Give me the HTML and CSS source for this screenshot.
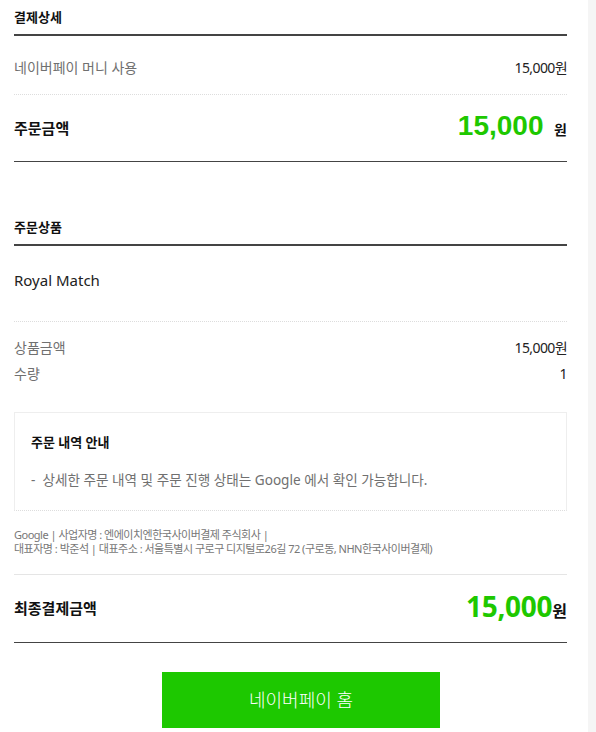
FILE: index.html
```html
<!DOCTYPE html>
<html>
<head>
	<meta charset="UTF-8">
	<title>결제상세</title>
	<link rel="stylesheet" href="styles.css">
</head>
<body>
	<div class="page">
		<section class="pay">
			<h2 class="sec-title">결제상세</h2>
			<div class="row row-money">
				<span class="label">네이버페이 머니 사용</span>
				<span class="value">15,000원</span>
			</div>
			<div class="row row-total">
				<span class="total-label">주문금액</span>
				<span class="total-value"><em>15,000</em> 원</span>
			</div>
		</section>

		<section class="goods">
			<h2 class="sec-title">주문상품</h2>
			<div class="goods-name">Royal Match</div>
			<div class="goods-detail">
				<div class="row">
					<span class="label">상품금액</span>
					<span class="value">15,000원</span>
				</div>
				<div class="row">
					<span class="label">수량</span>
					<span class="value">1</span>
				</div>
			</div>
			<div class="notice">
				<h3>주문 내역 안내</h3>
				<p>- &nbsp;상세한 주문 내역 및 주문 진행 상태는 Google 에서 확인 가능합니다.</p>
			</div>
			<p class="seller">
				Google | 사업자명 : 엔에이치엔한국사이버결제 주식회사 |<br>
				대표자명 : 박준석 | 대표주소 : 서울특별시 구로구 디지털로26길 72 (구로동, NHN한국사이버결제)
			</p>
		</section>

		<div class="row row-final">
			<span class="total-label">최종결제금액</span>
			<span class="final-value"><em>15,000</em>원</span>
		</div>

		<div class="btn-area">
			<a class="btn-home" href="#">네이버페이 홈</a>
		</div>
	</div>
</body>
</html>
```

FILE: styles.css
```css
html {
	background: #f5f5f5;
}
body {
	margin: 0;
	width: 588px;
	min-height: 732px;
	background: #fff;
	font-family: "Noto Sans", "Noto Sans CJK KR", sans-serif;
	color: #333;
}
.page {
	padding: 0 21px 0 14px;
}
.sec-title {
	margin: 0;
	padding: 9px 0 8px;
	font-size: 13px;
	line-height: 17px;
	font-weight: bold;
	color: #111;
	border-bottom: 2px solid #444;
}
.row {
	display: flex;
	justify-content: space-between;
	align-items: center;
}
.label {
	font-size: 14px;
	line-height: 18px;
	height: 18px;
	color: #707070;
}
.value {
	font-size: 14px;
	line-height: 18px;
	height: 18px;
	letter-spacing: -0.6px;
	color: #222;
}
.row-money {
	padding: 23px 0 17px;
	border-bottom: 1px dotted #ddd;
}
.row-total {
	padding: 17px 0 17px;
	border-bottom: 1px solid #444;
}
.total-label {
	font-size: 15px;
	line-height: 32px;
	font-weight: bold;
	color: #111;
}
.total-value,
.final-value {
	height: 32px;
	font-size: 14px;
	line-height: 32px;
	font-weight: bold;
	color: #111;
}
.total-value em {
	font-style: normal;
	font-family: "Liberation Sans", Arial, sans-serif;
	font-size: 28px;
	line-height: 28px;
	color: #1ec800;
	margin-right: 7px;
}
.goods {
	margin-top: 48px;
}
.goods-name {
	padding: 23px 0 30px;
	font-size: 15px;
	line-height: 22px;
	color: #222;
	border-bottom: 1px dotted #ddd;
}
.goods-detail {
	display: flex;
	flex-direction: column;
	gap: 6px;
	padding-top: 16px;
}
.goods-detail .label,
.goods-detail .value {
	line-height: 20px;
	height: 20px;
}
.notice {
	margin-top: 28px;
	padding: 19px 16px 20px;
	border: 1px solid #eee;
	border-bottom-style: dotted;
	border-bottom-color: #ddd;
}
.notice h3 {
	margin: 0;
	font-size: 13px;
	line-height: 20px;
	font-weight: bold;
	color: #111;
}
.notice p {
	margin: 18px 0 0;
	font-size: 13.6px;
	line-height: 20px;
	color: #707070;
}
.seller {
	margin: 0;
	padding: 17px 0 18px;
	font-size: 11px;
	line-height: 14px;
	letter-spacing: -0.5px;
	color: #777;
	border-bottom: 1px solid #e5e5e5;
}
.row-final {
	padding: 17px 0 18px;
	border-bottom: 1px solid #444;
}
.final-value {
	font-size: 16px;
}
.final-value em {
	font-style: normal;
	font-size: 28px;
	line-height: 28px;
	letter-spacing: -0.3px;
	color: #1ec800;
}
.btn-area {
	padding: 29px 0 4px 148px;
}
.btn-home {
	display: block;
	width: 278px;
	height: 56px;
	line-height: 56px;
	text-align: center;
	background: #1dc800;
	color: #fff;
	font-size: 18px;
	font-weight: 300;
	text-decoration: none;
}
```
